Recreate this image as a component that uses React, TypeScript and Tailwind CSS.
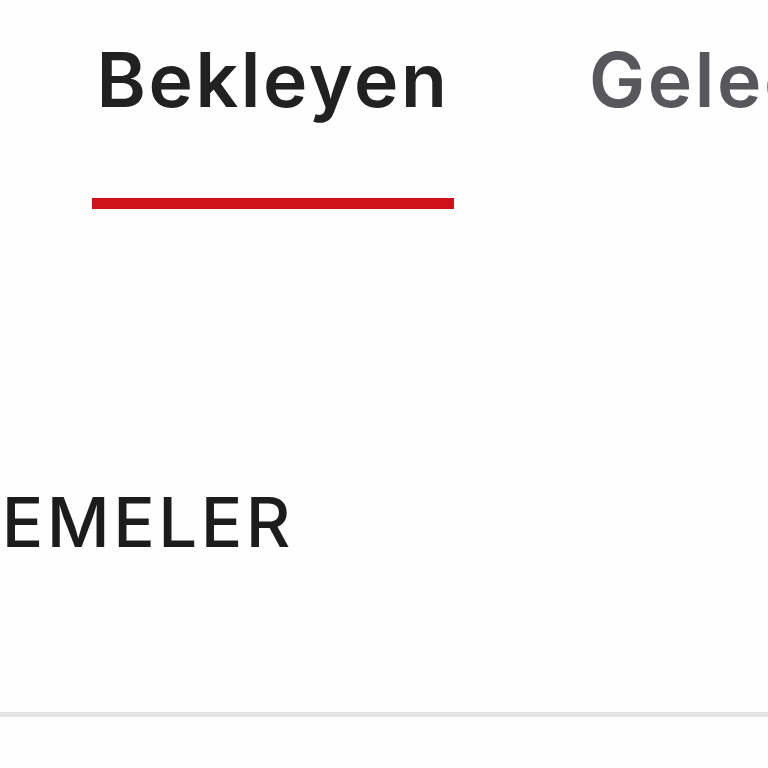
export default function App() {
  return (
    <div className="w-[768px] h-[768px] overflow-hidden bg-[#fefefe] font-['Inter','Noto_Sans',sans-serif]">
      {/* Tabs */}
      <div className="flex pt-[42px] pl-[92px] gap-[135px] whitespace-nowrap">
        <div className="flex flex-col items-center w-[362px] shrink-0">
          <span className="text-[75px] leading-none font-semibold tracking-[0.035em] text-[#212121]">Bekleyen</span>
          <div className="mt-[81px] h-[11px] w-full bg-[#d0111c]" />
        </div>
        <div className="shrink-0">
          <span className="text-[75px] leading-none font-semibold tracking-[0.035em] text-[#58585c]">Gelecek</span>
        </div>
      </div>

      {/* Section title */}
      <div className="mt-[279px] w-[294px] flex justify-end whitespace-nowrap">
        <span className="text-[69px] leading-none font-medium tracking-[0.05em] text-[#1c1c1c]">
          GÜNCELLEMELER
        </span>
      </div>

      {/* Divider */}
      <div className="mt-[155px] h-[5px] bg-[#e4e4e4]" />
    </div>
  )
}
